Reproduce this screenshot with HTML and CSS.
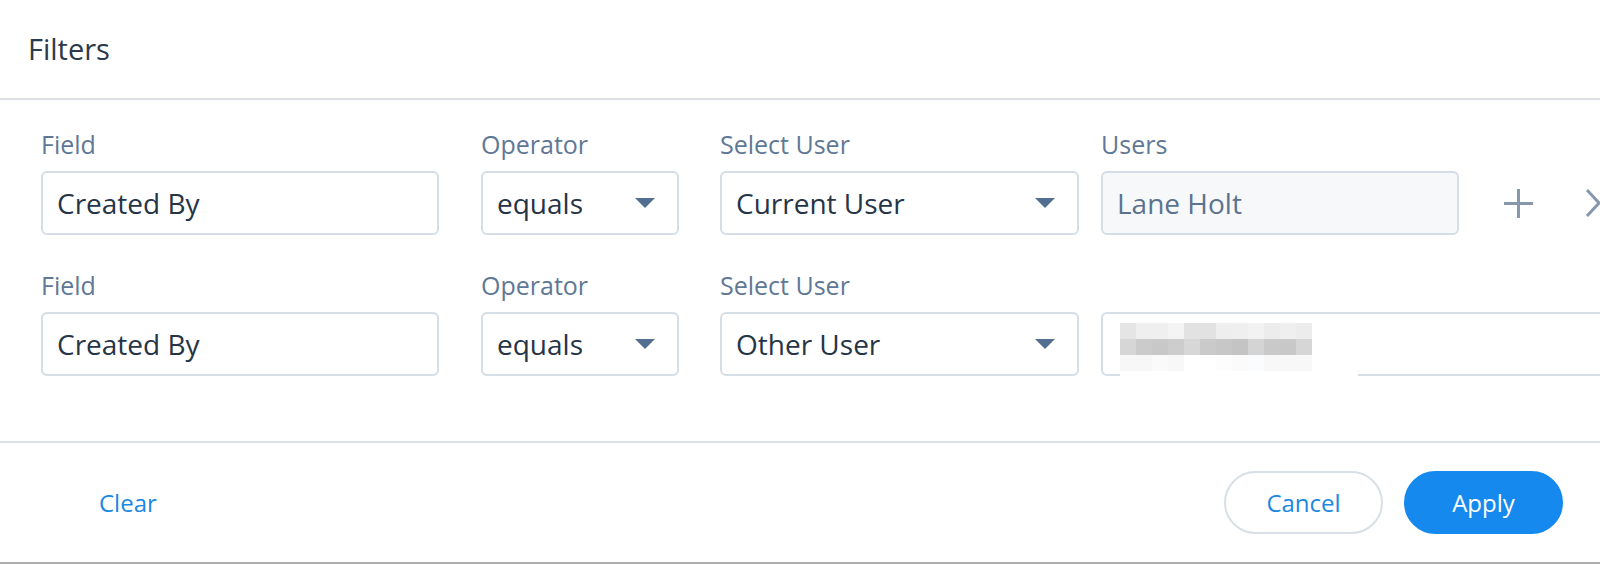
FILE: index.html
```html
<!DOCTYPE html>
<html lang="en">
<head>
<meta charset="utf-8">
<title>Filters</title>
<link rel="stylesheet" href="styles.css">
</head>
<body>
<div class="modal">
  <header class="header">
    <h2 class="title">Filters</h2>
  </header>
  <section class="content">
    <div class="row">
      <div class="col col-field">
        <div class="label">Field</div>
        <div class="input">Created By</div>
      </div>
      <div class="col col-op">
        <div class="label">Operator</div>
        <div class="input select">equals<span class="caret"></span></div>
      </div>
      <div class="col col-sel">
        <div class="label">Select User</div>
        <div class="input select">Current User<span class="caret"></span></div>
      </div>
      <div class="col col-users">
        <div class="label">Users</div>
        <div class="input disabled">Lane Holt</div>
      </div>
      <div class="actions">
        <svg class="icon-plus" width="29" height="29" viewBox="0 0 29 29" aria-hidden="true"><path d="M14.5 0V29M0 14.5H29" fill="none" stroke="currentColor" stroke-width="3"/></svg>
        <svg class="icon-chev" width="16" height="28" viewBox="0 0 16 28" aria-hidden="true"><path d="M2 1L14 14L2 27" fill="none" stroke="currentColor" stroke-width="3"/></svg>
      </div>
    </div>
    <div class="row row-second">
      <div class="col col-field">
        <div class="label">Field</div>
        <div class="input">Created By</div>
      </div>
      <div class="col col-op">
        <div class="label">Operator</div>
        <div class="input select">equals<span class="caret"></span></div>
      </div>
      <div class="col col-sel">
        <div class="label">Select User</div>
        <div class="input select">Other User<span class="caret"></span></div>
      </div>
      <div class="col col-other">
        <div class="label label-empty"></div>
        <div class="input input-other">
          <div class="blur">
            <div class="blur-grid">
              <span class="s-e5"></span><span class="s-ef"></span><span class="s-ef"></span><span class="s-f4"></span><span class="s-e2"></span><span class="s-e2"></span><span class="s-ee"></span><span class="s-ef"></span><span class="s-f2"></span><span class="s-ec"></span><span class="s-ef"></span><span class="s-ec"></span>
              <span class="s-d6"></span><span class="s-cb"></span><span class="s-c8"></span><span class="s-cd"></span><span class="s-d7"></span><span class="s-ca"></span><span class="s-c7"></span><span class="s-c4"></span><span class="s-d4"></span><span class="s-c9"></span><span class="s-c8"></span><span class="s-d6"></span>
              <span class="s-f7"></span><span class="s-f6"></span><span class="s-fa"></span><span class="s-f8"></span><span class="s-ff"></span><span class="s-ff"></span><span class="s-fd"></span><span class="s-fb"></span><span class="s-fc"></span><span class="s-f8"></span><span class="s-f8"></span><span class="s-f8"></span>
            </div>
          </div>
        </div>
      </div>
    </div>
  </section>
  <footer class="footer">
    <button class="btn-link" type="button">Clear</button>
    <div class="footer-right">
      <button class="btn btn-outline" type="button">Cancel</button>
      <button class="btn btn-primary" type="button">Apply</button>
    </div>
  </footer>
</div>
</body>
</html>
```

FILE: styles.css
```css
* { box-sizing: border-box; }

html, body {
  margin: 0;
  padding: 0;
  background: #ffffff;
}

body {
  width: 1600px;
  height: 564px;
  overflow: hidden;
  font-family: "Open Sans", "Noto Sans", "Liberation Sans", sans-serif;
  color: #263447;
}

.modal {
  width: 1600px;
  height: 564px;
  display: flex;
  flex-direction: column;
  overflow: hidden;
}

.header {
  height: 100px;
  flex: none;
  display: flex;
  align-items: center;
  padding: 0 0 2px 28px;
  border-bottom: 2px solid #dcdfe3;
}

.title {
  margin: 0;
  font-size: 29px;
  font-weight: 400;
  color: #2b394b;
}

.content {
  height: 343px;
  flex: none;
  padding: 28px 0 0 41px;
  border-bottom: 2px solid #dcdfe3;
  overflow: hidden;
}

.row {
  display: flex;
  align-items: flex-end;
  white-space: nowrap;
}

.row-second {
  margin-top: 34px;
}

.col {
  display: flex;
  flex-direction: column;
  flex: none;
}

.col-field { width: 398px; margin-right: 42px; }
.col-op { width: 198px; margin-right: 41px; }
.col-sel { width: 359px; margin-right: 22px; }
.col-users { width: 358px; }
.col-other { width: 560px; }

.label {
  height: 32px;
  line-height: 32px;
  font-size: 25px;
  color: #5f7895;
  margin-bottom: 11px;
}

.input {
  height: 64px;
  border: 2px solid #d5dde6;
  border-radius: 6px;
  background: #ffffff;
  display: flex;
  align-items: center;
  padding: 0 14px;
  font-size: 28px;
  color: #263447;
}

.select {
  justify-content: space-between;
  padding-right: 22px;
}

.caret {
  width: 0;
  height: 0;
  border-left: 10px solid transparent;
  border-right: 10px solid transparent;
  border-top: 10px solid #526f90;
  margin-top: -1px;
}

.disabled {
  background: #f6f8fa;
  color: #5b7390;
}

.input-other {
  position: relative;
}

.blur {
  position: absolute;
  left: 17px;
  top: 1px;
  width: 238px;
  height: 64px;
  background: #ffffff;
  padding-top: 8px;
}

.blur-grid {
  display: grid;
  grid-template-columns: repeat(12, 16px);
  grid-auto-rows: 16px;
}

.s-c4 { background: #c4c4c4; }
.s-c7 { background: #c7c7c7; }
.s-c8 { background: #c8c8c8; }
.s-c9 { background: #c9c9c9; }
.s-ca { background: #cacaca; }
.s-cb { background: #cbcbcb; }
.s-cd { background: #cdcdcd; }
.s-d4 { background: #d4d4d4; }
.s-d6 { background: #d6d6d6; }
.s-d7 { background: #d7d7d7; }
.s-e2 { background: #e2e2e2; }
.s-e5 { background: #e5e5e5; }
.s-ec { background: #ececec; }
.s-ee { background: #eeeeee; }
.s-ef { background: #efefef; }
.s-f2 { background: #f2f2f2; }
.s-f4 { background: #f4f4f4; }
.s-f6 { background: #f6f7f6; }
.s-f7 { background: #f7f7f7; }
.s-f8 { background: #f8f8f8; }
.s-fa { background: #fafafa; }
.s-fb { background: #fbfbfb; }
.s-fc { background: #fbfcfe; }
.s-fd { background: #fdfdfd; }
.s-ff { background: #ffffff; }

.actions {
  height: 64px;
  display: flex;
  align-items: center;
  padding-left: 45px;
  color: #8797ad;
  flex: none;
}

.icon-plus { display: block; }
.icon-chev { display: block; margin-left: 52px; }

.footer {
  flex: 1;
  display: flex;
  align-items: center;
  justify-content: space-between;
  padding: 0 37px 0 99px;
  border-bottom: 2px solid #aeaeae;
}

.btn-link {
  border: 0;
  background: none;
  padding: 0;
  font-family: inherit;
  font-size: 24px;
  color: #1a88e3;
  cursor: pointer;
}

.footer-right {
  display: flex;
  gap: 21px;
}

.btn {
  width: 159px;
  height: 63px;
  border-radius: 32px;
  font-family: inherit;
  font-size: 24px;
  cursor: pointer;
  padding: 0;
}

.btn-outline {
  background: #ffffff;
  border: 2px solid #d8dfe7;
  color: #1a88e3;
}

.btn-primary {
  background: #1589ee;
  border: 2px solid #1589ee;
  color: #ffffff;
}
```
